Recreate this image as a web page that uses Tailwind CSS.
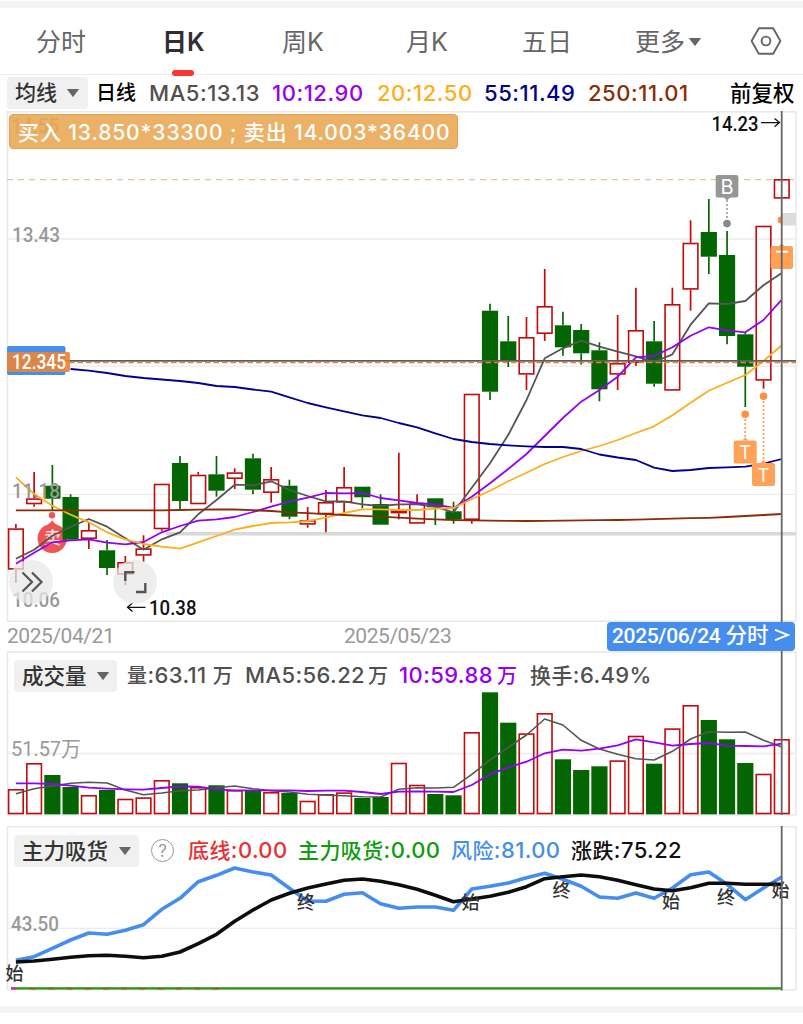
<!DOCTYPE html>
<html lang="zh-CN">
<head>
<meta charset="utf-8">
<title>日K</title>
<script src="https://cdn.jsdelivr.net/npm/@tailwindcss/browser@4"></script>
</head>
<body class="w-[803px] h-[1024px] overflow-hidden bg-white font-['Inter','Noto_Sans_CJK_SC',sans-serif] text-[#505050]">
<div class="flex flex-col h-[1024px] pt-px">
  <div class="h-[7px] bg-[#f4f4f4]"></div>

  <nav class="grid grid-cols-[126px_120px_124px_116px_113px_115px_40px] h-[67px] pl-9 border-b border-[#ebebeb] text-[25px] leading-[68px] text-[#666] whitespace-nowrap">
    <span>分时</span>
    <span class="relative font-bold text-[#2f2f31]">日<span class="font-semibold">K</span><i class="absolute left-[10px] bottom-0 w-[22px] h-[6px] rounded-full bg-[#fb3530]"></i></span>
    <span>周K</span>
    <span>月K</span>
    <span>五日</span>
    <span class="flex items-center h-[67px]">更多<svg class="w-3 h-2 ml-1" viewBox="0 0 12 8"><path d="M.5 0h11q.6 0 .3.5L6.5 7.6q-.5.6-1 0L.2.5Q-.1 0 .5 0z" fill="#666"/></svg></span>
    <svg class="w-8 h-7 mt-[19px]" viewBox="0 0 32 28" fill="none" stroke="#666" stroke-width="1.9" stroke-linejoin="round"><path d="M8.8 1.2h14.4L30.4 14l-7.2 12.8H8.8L1.6 14z"/><circle cx="16" cy="14" r="4.4"/></svg>
  </nav>

  <div class="grid grid-cols-[89px_53px_123px_105px_107px_104px_143px_66px] h-9 pl-[7px] items-center font-medium text-[22px] leading-8 tracking-[0.55px] whitespace-nowrap">
    <button class="flex items-center justify-between w-[81px] h-8 pl-2 pr-[9px] rounded bg-[#f0f0f0] text-[#333] text-[21px] tracking-normal">均线<svg class="w-3 h-2" viewBox="0 0 12 8"><path d="M.5 0h11q.6 0 .3.5L6.5 7.6q-.5.6-1 0L.2.5Q-.1 0 .5 0z" fill="#666"/></svg></button>
    <span class="text-black text-[20px] tracking-normal">日线</span>
    <span>MA5:13.13</span>
    <span class="text-[#9300f5]">10:12.90</span>
    <span class="text-[#fdae1a]">20:12.50</span>
    <span class="text-[#000091]">55:11.49</span>
    <span class="text-[#8c2c05]">250:11.01</span>
    <span class="text-black text-[21.5px] tracking-normal -ml-px">前复权</span>
  </div>

  <div class="grid">
    <svg id="price" class="col-start-1 row-start-1 w-[803px] h-[511px]" viewBox="0 111 803 511"></svg>
    <div class="col-start-1 row-start-1 mt-[3px] ml-[9px] w-[449px] h-[35px] rounded border border-[#e3a24f] bg-[#e9a955]/90 text-white font-medium text-[21px] leading-[35px] pl-2 tracking-[0.88px] whitespace-nowrap z-10">买入 13.850*33300 ; 卖出 14.003*36400</div>
  </div>

  <div class="flex h-[29px] pl-[7px] pr-2 items-center font-['Roboto','Noto_Sans_CJK_SC',sans-serif] text-[21px] text-[#999] whitespace-nowrap">
    <span class="w-[337px] tracking-[-0.45px]">2025/04/21</span>
    <span class="grow tracking-[-0.45px]">2025/05/23</span>
    <span class="w-[188px] h-[29px] rounded bg-[#458eed] text-white leading-[28px] pl-[5px] font-medium"><span class="tracking-[-0.35px]">2025/06/24</span> <span class="text-[21.5px]">分时</span><svg class="inline w-4 h-3 ml-[5px] -mt-1" viewBox="0 0 16 12" fill="none" stroke="#fff" stroke-width="1.9"><path d="M1 .8L14.2 6 1 11.2"/></svg></span>
  </div>

  <div class="grid h-[165px]">
    <svg id="volume" class="col-start-1 row-start-1 w-[803px] h-[165px]" viewBox="0 651 803 165"></svg>
    <div class="col-start-1 row-start-1 z-10 grid grid-cols-[113px_119px_153px_131px_150px] h-8 mt-2 pl-[14px] items-center font-medium text-[22px] leading-8 tracking-[0.4px] whitespace-nowrap">
      <button class="flex items-center justify-between w-[103px] h-8 pl-2 pr-2 rounded bg-[#f0f0f0] text-[#333] text-[21.5px] tracking-normal">成交量<svg class="w-3 h-2" viewBox="0 0 12 8"><path d="M.5 0h11q.6 0 .3.5L6.5 7.6q-.5.6-1 0L.2.5Q-.1 0 .5 0z" fill="#666"/></svg></button>
      <span><span class="text-[20px]">量</span>:63.11<span class="text-[20px] ml-[6px]">万</span></span>
      <span class="-ml-px">MA5:56.22<span class="text-[20px] ml-[3px]">万</span></span>
      <span class="text-[#9300f5]">10:59.88<span class="text-[20px] ml-1">万</span></span>
      <span><span class="text-[21px]">换手</span>:6.49%</span>
    </div>
  </div>

  <div class="grid h-[165px] mt-[10px]">
    <svg id="force" class="col-start-1 row-start-1 w-[803px] h-[165px]" viewBox="0 826 803 165"></svg>
    <div class="col-start-1 row-start-1 z-10 grid grid-cols-[137px_37px_110px_153px_120px_150px] h-8 mt-2 pl-[14px] items-center font-medium text-[22px] leading-8 tracking-[0.4px] whitespace-nowrap">
      <button class="flex items-center justify-between w-[125px] h-8 pl-2 pr-2 rounded bg-[#f0f0f0] text-[#333] text-[21.5px] tracking-normal">主力吸货<svg class="w-3 h-2" viewBox="0 0 12 8"><path d="M.5 0h11q.6 0 .3.5L6.5 7.6q-.5.6-1 0L.2.5Q-.1 0 .5 0z" fill="#666"/></svg></button>
      <span class="flex items-center justify-center w-[23px] h-[23px] rounded-full border-[1.5px] border-[#999] text-[#999] text-[17px] leading-5 font-normal tracking-normal">?</span>
      <span class="text-[#e93030]"><span class="text-[21px]">底线</span>:0.00</span>
      <span class="text-[#109c10]"><span class="text-[21px]">主力吸货</span>:0.00</span>
      <span class="text-[#458eed]"><span class="text-[21px]">风险</span>:81.00</span>
      <span class="text-[#111]"><span class="text-[21px]">涨跌</span>:75.22</span>
    </div>
  </div>

  <div class="h-[7px] mt-[15px] bg-[#f4f4f4]"></div>
</div>

<script>
const X = i => 15.9 + i * 18.235;
const RED = '#c40a0a', GREEN = '#036603';
// side, body top, body bottom, high, low
const K = [
['r',528.3,569.7,524,583],['r',498.3,504.3,472,506.7],['g',485.7,498.7,465,510],['g',497,539.7,494.3,539.7],['r',530,539,522.7,549],
['g',550.3,568,540,575],['r',562,574.7,556,585.3],['r',548.3,555.7,535.3,561.7],['r',483.7,529.3,483.7,531],['g',463,501,456,509.3],
['r',474.7,504.3,472,504.3],['g',474.3,490.7,456,496.7],['r',472.3,479,468.3,489],['g',458.3,489.7,453.7,494.3],['r',479,493,467,502.7],
['g',485.7,516.7,479.7,519.3],['r',520,524.7,507,527.7],['r',502,514.3,490,532.3],['r',487,502.7,467,512.7],['g',486.7,497.3,486.7,508.3],
['g',504,524.7,494.3,524.7],['r',510.2,513.4,452.7,519.3],['r',503.3,523.7,494.3,523.7],['g',498.3,507.3,498.3,525],['g',511.3,519.3,501.7,523.7],
['r',393.7,520,393.7,523.7],['g',310.7,391.7,303.7,400],['g',341.3,360.7,316,367],['r',337,374.7,317,390],['r',306,334,269,341],
['g',325.3,347.3,311.7,355.7],['g',330,353.3,324,364.7],['g',350.3,389.3,342.3,401.3],['r',363,374.7,315,390],['r',330,363,287.7,366],
['g',341.3,383.7,321,386.7],['r',304,390.7,287.7,390.7],['r',242.7,289.7,220.3,310.7],['g',232,256.7,199,274],['g',255,336,231,344.3],
['g',334.3,366.7,332.7,407],['r',225.7,380.7,225.7,388.7],['r',179,198.7,179,198.7]];
const V = [789,763,775,787,795,790,798.7,797.3,780,783.3,787,785.3,790,791,792,793,800.7,794,792.3,798,797,762.7,784.7,794,795.3,732,692.3,722.7,733.3,713,759.3,770,766.3,760.3,735.7,763.7,728.3,705,720,739.3,763,773.7,739];
const ma5 = [558.7,549.7,535.7,527,519,526.7,538.3,549.7,539.3,532.3,514.3,500,484.7,485.3,481.3,490,496,501.3,501.3,504.3,506,504.3,504.3,506.7,512.3,487.7,463.3,435,400,358.3,348.3,340.7,346.7,351.7,356.3,362,354.3,324.7,303.3,304,301,285.3,273];
const ma10 = [563.7,552.7,542.3,540.3,539.3,542.7,544.3,542,532.3,526,520.7,519.3,517,512,506.7,501.7,497.7,493,493.3,493,498,500.3,503,504.3,508,496.7,483.3,469,454,436,418,401.7,390,376.7,357.3,356,347.3,335.7,327.3,330.3,332.3,320,299.7];
const ma20 = [477.3,494,505.7,514.7,522.3,532.3,539.3,544,546.7,548.7,542.3,536,529.7,526,523,522.3,521,517.7,513,509.3,509.3,510,510,508.7,508,499,490.7,481.3,472.7,464,457,451,446,440,433,426.3,415.3,402.7,390.7,382.7,375,361,345.3];
const ma55 = [null,null,null,369,370.7,373,376,378,379.5,381,383,386,387,389.5,391.7,397.3,403,407.3,411.3,415.3,418,423,427.3,433.3,439,442,444,445.3,446.3,447,447,449,454.5,457.5,460,467.7,471,470,468,467.3,466.7,463.7,459];
const ma250 = [510.3,510.3,510.3,510.3,510.3,510.3,510.3,510.3,510.3,510,509.7,509.5,509.5,510.2,511,512.3,513.2,514.2,515,515.8,516.7,517.7,518.7,519.4,520,520.4,520.6,520.8,521,520.8,520.6,520.4,520.2,520,519.7,519.2,518.7,518.2,517.8,517,516,515,514];
const v5 = [793.7,788.7,786,783.3,782.3,783,790,794.7,793,790.7,790,787.7,786,788.7,790.7,792,794.3,795,795.7,796.7,797,789.3,787.7,788,787.3,774.3,760,747.3,735,719,725,740.3,749,754.3,758.7,760,751.3,739,731.7,732.3,732,740.3,747];
const v10 = [783.3,783.3,784,785.7,787.7,788.7,789.3,789.7,788,786.3,786.7,789.3,790.3,790.3,790.3,790.3,791,790.7,790.7,792,794,791.7,791.3,791.7,792,785,774.3,767.3,761.7,753.3,749.7,750.7,748.7,745.3,739.3,742.3,745.7,744,743,745.7,746,746.3,743.7];
const risk = [960.3,956.7,948.3,940,933,934.3,930.3,924.7,909.3,898.3,881.7,875.3,868,872,875,888.3,901,901.3,894.3,892.7,903.7,908.3,907,907,910.3,889,886.3,883,877.7,873.3,879.3,886.3,897,898.3,893,898.3,888,874.7,872,884.3,899.7,888,877];
const trend = [962,961,959.3,957.3,955.7,955.3,956.3,957.7,956.3,952,943.7,934.3,921.3,910,900,893.3,888,884,880.3,879,881.3,884.7,889.3,895.3,901.7,899,896.3,892.3,886.7,878.7,876.7,875,876.7,880.3,884.7,889,890.7,887.7,883.3,883.3,884.3,884.3,884.3];

const line = (a, c, w = 1.8) => `<polyline fill="none" stroke="${c}" stroke-width="${w}" stroke-linejoin="round" points="${a.map((y, i) => y === null ? '' : X(i).toFixed(1) + ',' + y).join(' ')}"/>`;
const seg = (x1, y1, x2, y2, c, w = 1.5, d = '') => `<line x1="${x1}" y1="${y1}" x2="${x2}" y2="${y2}" stroke="${c}" stroke-width="${w}" stroke-dasharray="${d}"/>`;
const body = (s, i, t, b) => s === 'g'
  ? `<rect x="${X(i) - 8.1}" y="${t}" width="16.2" height="${b - t}" fill="${GREEN}"/>`
  : `<rect x="${X(i) - 7.3}" y="${t + .8}" width="14.6" height="${b - t - 1.6}" fill="none" stroke="${RED}" stroke-width="1.6"/>`;
const txt = (s, x, y, len, size, fill, extra = 'font-weight="500"') => `<text x="${x}" y="${y}" font-size="${size}" fill="${fill}" font-family="Roboto, 'Noto Sans CJK SC', sans-serif" ${len ? `textLength="${len}" lengthAdjust="spacingAndGlyphs"` : ''} ${extra}>${s}</text>`;
const frame = (t, b) => `<rect x="7.5" y="${t}" width="788.5" height="${b - t}" fill="none" stroke="#e9e9e9" stroke-width="1.6"/>`;
const cross = (t, b) => seg(781.7, t, 781.7, b, '#666', 1.8);
const tag = (x, y) => `<path d="M${x - 3} ${y}l3-3 3 3z" fill="#ff9d50"/><rect x="${x - 11.5}" y="${y}" width="23" height="23" rx="2" fill="#ffa257"/>` +
  `<text x="${x}" y="${y + 18.5}" text-anchor="middle" font-family="Inter" font-size="19" fill="#fff">T</text>`;

// price panel
let p = frame(111.8, 621.2);
[239, 366.3, 494.3].forEach(y => p += seg(8, y, 795, y, '#ececec', 1.3));
p += seg(7, 179.7, 796, 179.7, '#dfc59d', 1.3, '6 5');
p += seg(166, 533.8, 796, 533.8, '#d8d8d8', 3.4);
K.forEach(([s, t, b, h, l], i) => {
  const c = s === 'g' ? GREEN : RED;
  if (h < t) p += seg(X(i), h, X(i), t, c, 1.7);
  if (l > b) p += seg(X(i), b, X(i), l, c, 1.7);
  p += body(s, i, t, b);
  if (i === 2) p += '<path d="M52.200 520q2 4 8 6A14.700 14.700 0 1 1 44.200 526q6-2 8-6z" fill="#ef5555"/><circle cx="52" cy="515.300" r="3.200" fill="#ef5555"/>' + txt('卖', 44, 543.5, 17, 17, '#ffe3e3');
});
p += line(ma5, '#555') + line(ma10, '#9300f5') + line(ma20, '#fdae1a') + line(ma55, '#000091') + line(ma250, '#8c2c05');
p += txt('14.55', 11.5, 133, 47.5, 21, '#8c8c8c') + txt('13.43', 12, 242, 48, 21, '#999') + txt('11.18', 12, 497.5, 48, 21, '#999') + txt('10.06', 12, 606.5, 48, 21, '#999');
p += seg(7, 360.8, 796, 360.8, '#5c5c5c', 1.8) + seg(69, 362.5, 796, 362.5, '#ea8136', 1.3, '5.5 3');
p += '<rect x="7" y="346" width="58.5" height="29" rx="2" fill="#458eed"/><rect x="7" y="352" width="63" height="20" rx="2" fill="#e8853b" fill-opacity=".92"/>' + txt('12.345', 12, 369, 54, 20.5, '#fff');
p += txt('14.23', 711.5, 130.5, 47, 21, '#111') + '<path d="M761 122.6h18M774.5 118.5l5 4.1-5 4.1" fill="none" stroke="#111" stroke-width="1.3"/>';
p += txt('10.38', 149, 615, 47.5, 21, '#111') + '<path d="M145.5 607.3h-18M132.5 603l-5 4.3 5 4.3" fill="none" stroke="#111" stroke-width="1.3"/>';
// trade markers
p += '<rect x="715.7" y="175" width="22.6" height="22.5" rx="2" fill="#969696"/><path d="M723.5 197l3.5 3.5 3.5-3.5z" fill="#969696"/>' +
  '<text x="727" y="193.500" text-anchor="middle" font-family="Inter" font-size="20" fill="#fff">B</text>' +
  seg(727, 200, 727, 220, '#999', 1.6, '2 2') + '<circle cx="727" cy="223.6" r="3.8" fill="#888"/>';
p += '<circle cx="745.2" cy="414.3" r="3.8" fill="#ff8f3c"/>' + seg(745.2, 419, 745.2, 438, '#ff9d50', 1.6, '2 2') + tag(745.2, 440.5);
p += '<circle cx="763.5" cy="396.2" r="3.8" fill="#ff8f3c"/>' + seg(763.5, 401, 763.5, 461, '#ff9d50', 1.6, '2 2') + tag(763.5, 463);
p += '<circle cx="781" cy="220" r="3.4" fill="#ff8f3c"/>' + '<path d="M778 246.500l3.700-3 3.700 3z" fill="#ff9d50"/><rect x="770.5" y="246" width="22.500" height="23" rx="2" fill="#ffa257"/><path d="M776 251.700h12" stroke="#fff" stroke-width="1.900"/>';
p += '<rect x="782" y="213" width="14" height="12.500" fill="#dcdcdc"/>' + cross(111, 622);
// floating controls
p += '<circle cx="31" cy="581.8" r="22" fill="#e8e8e8" fill-opacity=".75"/><path d="M22.500 572.500l9.500 9.500-9.500 9.500M32 572.500l9.500 9.500-9.500 9.500" fill="none" stroke="#555" stroke-width="2.200"/>';
p += '<circle cx="135" cy="581.8" r="22" fill="#e8e8e8" fill-opacity=".75"/><path d="M125.300 581V572.300H134.500M145.300 583V592H136" fill="none" stroke="#555" stroke-width="2.400"/>';
document.getElementById('price').innerHTML = p;

// volume panel
let v = frame(652, 814.8) + seg(8, 753.5, 795, 753.5, '#ececec', 1.3) + txt('51.57万', 11, 756, 70, 21, '#999', '');
V.forEach((t, i) => v += body(K[i][0], i, t, 814.3));
v += line(v5, '#555', 1.6) + line(v10, '#9300f5') + cross(651, 815);
document.getElementById('volume').innerHTML = v;

// main-force panel
let f = frame(826.6, 989.8) + seg(8, 928.3, 795, 928.3, '#ececec', 1.3) + txt('43.50', 11, 931, 48, 21, '#999');
f += line(risk, '#458eed', 3.6) + line(trend, '#0d0d0d', 3.6);
f += seg(11, 988.4, 781, 988.4, '#2c8f10', 2.2) + seg(11, 988.4, 16, 988.4, '#f016c0', 2.2) + seg(30, 988.4, 220, 988.4, '#7d6a2c', 2, '6 12.230');
[['始',5.5,980],['终',297,908.5],['始',461.5,909],['终',552.5,896.5],['始',662,908],['终',717,903.5],['始',771.5,897]].forEach(([s, x, y]) => f += txt(s, x, y, 0, 18, '#333'));
f += cross(826, 990.5);
document.getElementById('force').innerHTML = f;
</script>
</body>
</html>
